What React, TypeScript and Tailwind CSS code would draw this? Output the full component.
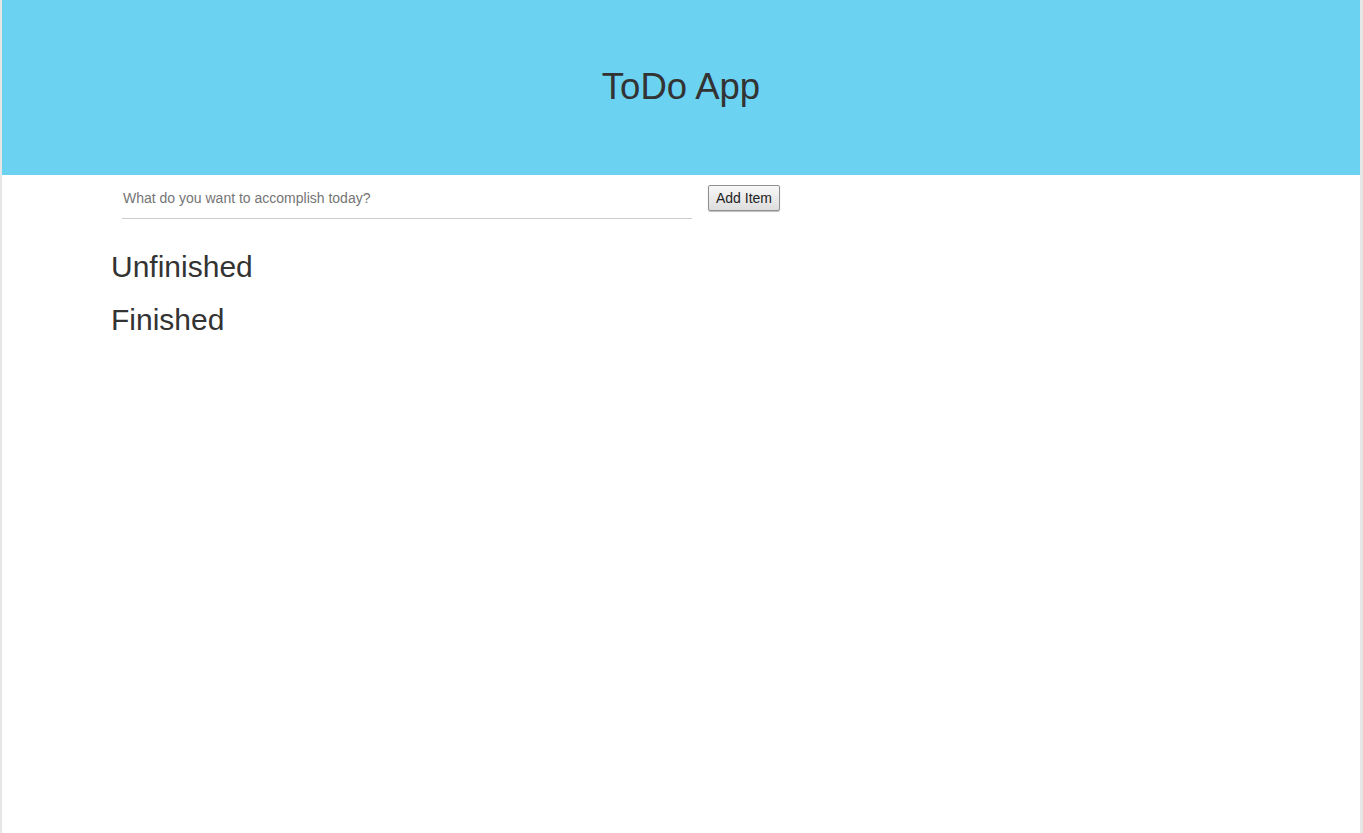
export default function App() {
  return (
    <div className="min-h-[833px] border-l-2 border-r-[3px] border-[#e6e6e6] bg-white font-['Liberation_Sans',Arial,sans-serif] text-[#333]">
      <header className="flex h-[175px] items-center justify-center bg-[#6bd2f2]">
        <h1 className="text-[36.5px] leading-[1.1]">ToDo App</h1>
      </header>

      <div className="mx-auto w-[1170px] px-[15px]">
        <form className="flex items-start" onSubmit={(e) => e.preventDefault()}>
          <input
            type="text"
            placeholder="What do you want to accomplish today?"
            className="ml-[11px] mt-[3px] h-[41px] w-[570px] border-b border-[#cccccc] px-px text-[14px] text-[#333] outline-none placeholder:text-[#757575]"
          />
          <button
            type="submit"
            className="ml-4 mt-[10px] h-[26px] rounded-[2px] border border-[#8f8f8f] bg-gradient-to-b from-[#f8f8f8] to-[#dddddd] px-[7px] text-[14px] text-[#222] shadow-[0_1px_1px_rgba(0,0,0,0.25)]"
          >
            Add Item
          </button>
        </form>

        <h2 className="mt-[31px] text-[30px] leading-[33px]">Unfinished</h2>
        <ul></ul>
        <h2 className="mt-[20px] text-[30px] leading-[33px]">Finished</h2>
        <ul></ul>
      </div>
    </div>
  );
}
